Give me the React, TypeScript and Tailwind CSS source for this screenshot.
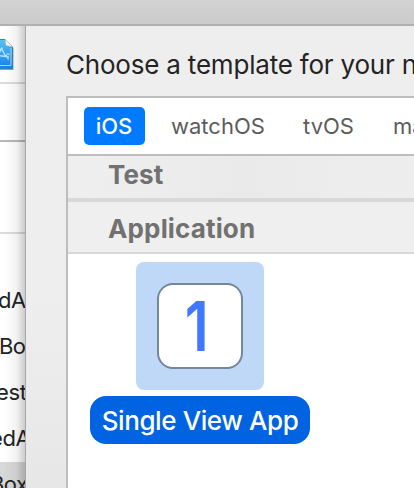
import React from "react";

function DocumentIcon() {
  return (
    <svg width="14" height="34" viewBox="0 0 14 34" className="block">
      <defs>
        <linearGradient id="doc" x1="0" y1="0" x2="0" y2="1">
          <stop offset="0" stopColor="#55c2f5" />
          <stop offset="1" stopColor="#1682e8" />
        </linearGradient>
      </defs>
      <path d="M-6 2H5L13.500 10V32H-6Z" fill="#8fa5b5" />
      <path d="M-6 1H5L13 9V31H-6Z" fill="#2b84cc" />
      <path d="M-6 2H4.500L12 9V30H-6Z" fill="url(#doc)" />
      <path d="M-6 27.500H11V10" fill="none" stroke="#b4dffb" strokeWidth="0.900" />
      <path d="M5 1L13 9L6 7.500Z" fill="#f4f4f2" stroke="#a5bdca" strokeWidth="0.500" />
      <path d="M-3 19L1.500 10.500L6 19M-1 17.500L9 19M0 11.500L2.500 10M6 17L8.500 21.500M6.500 16L9.500 16.500" fill="none" stroke="#b5e0fb" strokeWidth="1.500" />
    </svg>
  );
}

function SidebarRow({ text, selected, shift = "" }: { text: string; selected?: boolean; shift?: string }) {
  return (
    <div className={`h-[46px] shrink-0 overflow-hidden whitespace-nowrap pt-2 text-[22px] leading-[28px] text-[#232323] ${selected ? "bg-[#d8d8d8]" : ""}`}>
      <span className={`block ${shift}`}>{text}</span>
    </div>
  );
}

export default function App() {
  return (
    <div className="flex h-[488px] w-[414px] flex-col overflow-hidden bg-white font-['Inter','Liberation_Sans',sans-serif]">
      <div className="h-[26px] shrink-0 border-b-2 border-[#b0b0b0] bg-linear-to-b from-[#d3d3d3] to-[#cbcbcb]" />
      <div className="flex min-h-0 flex-1">
        <div className="relative flex w-[26px] shrink-0 flex-col overflow-hidden bg-white">
          <div className="h-[58px] shrink-0 border-b-2 border-[#dcdcdc] pt-3"><DocumentIcon /></div>
          <div className="h-[58px] shrink-0 border-b-2 border-[#b8b8b8]" />
          <div className="h-[92px] shrink-0 border-b-2 border-[#dcdcdc]" />
          <div className="h-[44px] shrink-0" />
          <SidebarRow text="dA" shift="-ml-[2px] tracking-[-0.4px]" />
          <SidebarRow text="Bo" shift="-ml-[1px] tracking-[-0.7px]" />
          <SidebarRow text="est" shift="-ml-[4px] tracking-[-0.4px]" />
          <SidebarRow text="edA" shift="-ml-[10px] tracking-[-0.4px]" />
          <SidebarRow text="Box" shift="-ml-[10px] tracking-[-0.6px]" selected />
          <div className="absolute inset-0 border-r border-[#a8a8a8] bg-linear-to-r from-black/0 from-15% via-black/5 via-65% to-black/20" />
        </div>
        <div className="flex min-w-0 flex-1 flex-col bg-linear-to-b from-[#eeeeee] from-60% to-[#e7e7e7] pl-10">
          <h1 className="h-[70px] shrink-0 whitespace-nowrap pt-[23px] text-[26px] leading-8 tracking-[-0.2px] text-[#242424]">
            Choose a template for your new project:
          </h1>
          <div className="flex min-h-0 flex-1 flex-col overflow-hidden border-l-2 border-t-2 border-[#bdbdbd] bg-white">
            <div className="flex h-[58px] shrink-0 items-start border-b-2 border-[#bdbdbd] pl-4 pt-[9px] text-[22px] leading-[38px] text-[#5c5c5c]">
              <div className="h-[38px] w-[61px] shrink-0 rounded-[5px] bg-[#007aff] pr-px text-center font-medium text-white">iOS</div>
              <div className="ml-[26px] w-[132px] shrink-0">watchOS</div>
              <div className="w-[90px] shrink-0">tvOS</div>
              <div className="shrink-0">macOS</div>
            </div>
            <div className="h-[46px] shrink-0 border-b-4 border-[#d8d8d8] bg-linear-to-r from-[#efefef] via-[#eaeaea] to-[#eeeeee] pl-10 pt-[3px] text-[26px] font-bold leading-8 tracking-[0.1px] text-[#717171]">Test</div>
            <div className="h-[52px] shrink-0 border-b-2 border-[#d8d8d8] bg-[#efefef] pl-10 pt-[11px] text-[26px] font-bold leading-8 tracking-[0.15px] text-[#717171]">Application</div>
            <div className="ml-[22px] mt-2 flex w-[220px] flex-col items-center">
              <div className="flex h-32 w-32 items-center justify-center rounded-lg bg-[#bfd8f7]">
                <div className="flex h-[86px] w-[86px] items-center justify-center rounded-[16px] border-2 border-[#76869b] bg-white pr-[7px]">
                  <span className="block origin-center scale-x-[0.82] text-[69px] font-semibold leading-none text-[#4079ff]">1</span>
                </div>
              </div>
              <div className="mt-1.5 h-12 w-[220px] whitespace-nowrap rounded-[16px] bg-[#0063e1] text-center text-[26px] font-medium leading-[49px] tracking-[-0.4px] text-white">Single View App</div>
            </div>
          </div>
        </div>
      </div>
    </div>
  );
}
